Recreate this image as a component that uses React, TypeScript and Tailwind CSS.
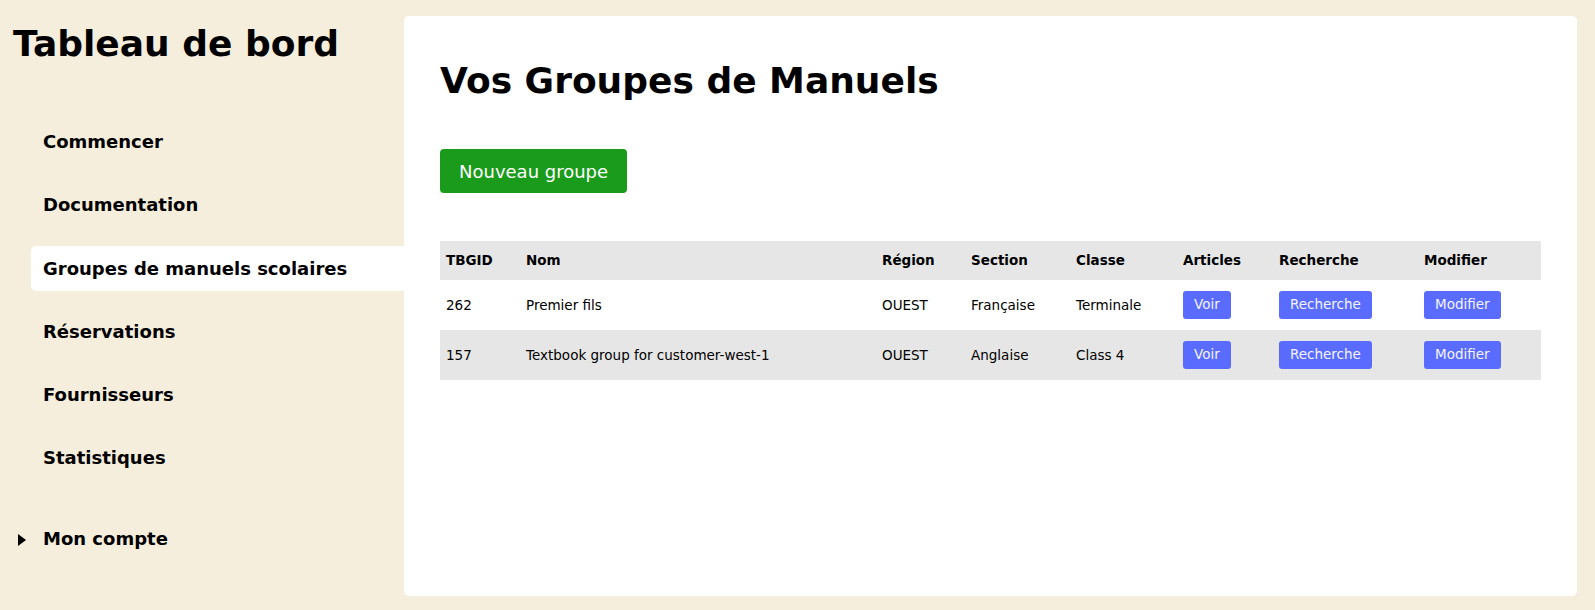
import React from 'react';

type Group = {
  id: number;
  name: string;
  region: string;
  section: string;
  classe: string;
};

const groups: Group[] = [
  { id: 262, name: 'Premier fils', region: 'OUEST', section: 'Française', classe: 'Terminale' },
  { id: 157, name: 'Textbook group for customer-west-1', region: 'OUEST', section: 'Anglaise', classe: 'Class 4' },
];

const navItems = [
  'Commencer',
  'Documentation',
  'Groupes de manuels scolaires',
  'Réservations',
  'Fournisseurs',
  'Statistiques',
];

const activeItem = 'Groupes de manuels scolaires';

const columns = [
  { label: 'TBGID', width: 'w-[80px]' },
  { label: 'Nom', width: 'w-[356px]' },
  { label: 'Région', width: 'w-[89px]' },
  { label: 'Section', width: 'w-[105px]' },
  { label: 'Classe', width: 'w-[107px]' },
  { label: 'Articles', width: 'w-[96px]' },
  { label: 'Recherche', width: 'w-[145px]' },
  { label: 'Modifier', width: 'w-[123px]' },
];

const SmallButton: React.FC<{ children: React.ReactNode }> = ({ children }) => (
  <button className="h-[28px] px-[11px] rounded-[3px] bg-[#5a6cff] text-[#f4f4ff] text-[13.5px] leading-none">
    {children}
  </button>
);

const Sidebar: React.FC = () => (
  <aside className="w-[404px] shrink-0 flex flex-col">
    <h1 className="pt-[23px] pl-[13px] text-[36px] leading-[42px] font-bold">Tableau de bord</h1>
    <nav className="mt-[54px] ml-[31px] flex flex-col gap-y-[18.3px]">
      {navItems.map((item) => (
        <a
          key={item}
          className={`h-[45px] flex items-center pl-[12px] rounded-l-[5px] text-[18px] font-bold ${
            item === activeItem ? 'bg-white' : ''
          }`}
        >
          {item}
        </a>
      ))}
    </nav>
    {/* collapsed account menu */}
    <div className="mt-[36px] h-[45px] flex items-center pl-[18px] text-[18px] font-bold">
      <svg width="8" height="12" viewBox="0 0 8 12" className="mt-[2px] mr-[17px]">
        <polygon points="0,0 8,6 0,12" fill="#000" />
      </svg>
      Mon compte
    </div>
  </aside>
);

export default function App() {
  return (
    <div className="min-h-screen flex bg-[#f5eedc] text-black font-['DejaVu_Sans',sans-serif]">
      <Sidebar />
      <main className="flex-1 mt-[16px] mr-[18px] mb-[14px] rounded-[5px] bg-white pt-[44px] px-[36px]">
        <h2 className="text-[36px] leading-[42px] font-bold">Vos Groupes de Manuels</h2>
        <button className="mt-[47px] h-[44px] px-[19px] rounded-[4px] bg-[#1b9b1b] text-white text-[18px]">
          Nouveau groupe
        </button>
        <table className="mt-[48px] w-full table-fixed border-collapse text-[13.5px]">
          <colgroup>
            {columns.map((c) => (
              <col key={c.label} className={c.width} />
            ))}
          </colgroup>
          <thead>
            <tr className="h-[39px] bg-[#e6e6e6]">
              {columns.map((c) => (
                <th key={c.label} className="pl-[6px] text-left font-bold">
                  {c.label}
                </th>
              ))}
            </tr>
          </thead>
          <tbody>
            {groups.map((g, i) => (
              <tr key={g.id} className={`h-[50px] ${i % 2 === 1 ? 'bg-[#e6e6e6]' : ''}`}>
                <td className="pl-[6px]">{g.id}</td>
                <td className="pl-[6px]">{g.name}</td>
                <td className="pl-[6px]">{g.region}</td>
                <td className="pl-[6px]">{g.section}</td>
                <td className="pl-[6px]">{g.classe}</td>
                <td className="pl-[6px]">
                  <SmallButton>Voir</SmallButton>
                </td>
                <td className="pl-[6px]">
                  <SmallButton>Recherche</SmallButton>
                </td>
                <td className="pl-[6px]">
                  <SmallButton>Modifier</SmallButton>
                </td>
              </tr>
            ))}
          </tbody>
        </table>
      </main>
    </div>
  );
}
